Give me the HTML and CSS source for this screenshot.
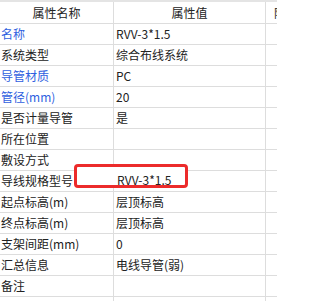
FILE: index.html
```html
<!DOCTYPE html>
<html>
<head>
<meta charset="utf-8">
<link rel="stylesheet" href="styles.css">
</head>
<body>
<div class="topbar"></div>
<div class="grid">
  <div class="cell head">属性名称</div><div class="cell head">属性值</div><div class="cell head extra">附加</div>
  <div class="cell name blue">名称</div><div class="cell val">RVV-3*1.5</div><div class="cell extra"></div>
  <div class="cell name">系统类型</div><div class="cell val">综合布线系统</div><div class="cell extra"></div>
  <div class="cell name blue">导管材质</div><div class="cell val">PC</div><div class="cell extra"></div>
  <div class="cell name blue">管径(mm)</div><div class="cell val">20</div><div class="cell extra"></div>
  <div class="cell name">是否计量导管</div><div class="cell val">是</div><div class="cell extra"></div>
  <div class="cell name">所在位置</div><div class="cell val"></div><div class="cell extra"></div>
  <div class="cell name">敷设方式</div><div class="cell val"></div><div class="cell extra"></div>
  <div class="cell name">导线规格型号</div><div class="cell val"></div><div class="cell extra"></div>
  <div class="cell name">起点标高(m)</div><div class="cell val">层顶标高</div><div class="cell extra"></div>
  <div class="cell name">终点标高(m)</div><div class="cell val">层顶标高</div><div class="cell extra"></div>
  <div class="cell name">支架间距(mm)</div><div class="cell val">0</div><div class="cell extra"></div>
  <div class="cell name">汇总信息</div><div class="cell val">电线导管(弱)</div><div class="cell extra"></div>
  <div class="cell name">备注</div><div class="cell val"></div><div class="cell extra"></div>
  <div class="cell name">图层</div><div class="cell val"></div><div class="cell extra"></div>
  <div class="editor">RVV-3*1.5</div>
</div>
</body>
</html>
```
FILE: styles.css
```css
html, body {
  margin: 0;
  padding: 0;
  background: #ffffff;
  overflow: hidden;
}
body {
  width: 277px;
  height: 301px;
  font-family: "Noto Sans CJK SC", "Noto Sans", sans-serif;
  font-size: 12px;
  color: #222222;
}
.topbar {
  height: 2px;
  background: #e4e4e4;
}
.grid {
  position: relative;
  display: grid;
  grid-template-columns: 114px 152px 40px;
  grid-auto-rows: 21px;
  grid-template-rows: 22px;
}
.cell {
  box-sizing: border-box;
  border-right: 1px solid #dddddd;
  border-bottom: 1px solid #dddddd;
  line-height: 20px;
  white-space: nowrap;
  overflow: hidden;
}
.head {
  text-align: center;
  line-height: 21px;
}
.head.extra {
  text-align: left;
  padding-left: 8px;
}
.name {
  padding-left: 1px;
}
.val {
  padding-left: 2px;
}
.blue {
  color: #2f5fe0;
}
.editor {
  position: absolute;
  left: 74px;
  top: 162px;
  width: 114px;
  height: 24px;
  box-sizing: border-box;
  border: 3px solid #ec2b2b;
  border-radius: 4px;
  background: #ffffff;
  padding-left: 40px;
  padding-top: 3px;
  line-height: 20px;
  white-space: nowrap;
}
```
